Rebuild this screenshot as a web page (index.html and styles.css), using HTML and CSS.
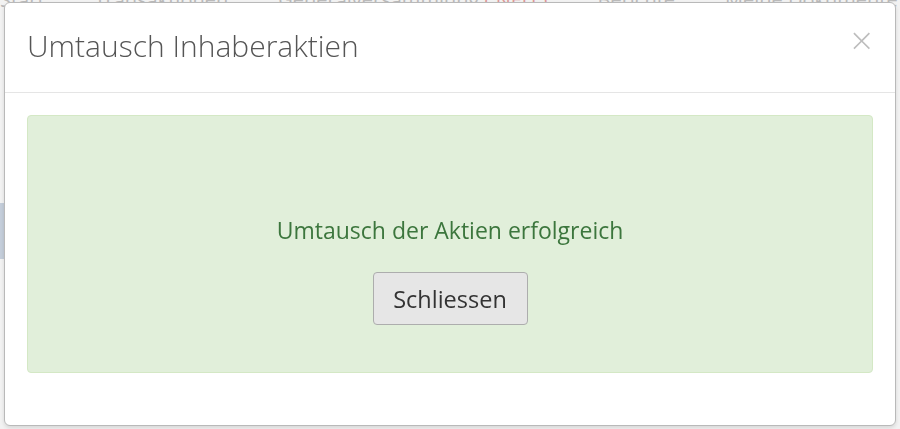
FILE: index.html
```html
<!DOCTYPE html>
<html lang="de">
<head>
<meta charset="utf-8">
<title>Umtausch Inhaberaktien</title>
<link rel="stylesheet" href="styles.css">
</head>
<body>
<div class="page">
  <nav class="nav">
    <span class="nav-item">Start</span>
    <span class="nav-item">Transaktionen</span>
    <span class="nav-item">Generalversammlung <span class="neu">( NEU )</span></span>
    <span class="nav-item">Berichte</span>
    <span class="nav-item">Meine Dokumente</span>
  </nav>
  <div class="page-side"></div>
</div>
<div class="backdrop"></div>
<div class="modal">
  <div class="modal-header">
    <h4 class="modal-title">Umtausch Inhaberaktien</h4>
    <span class="close">&times;</span>
  </div>
  <div class="modal-body">
    <div class="alert">
      <p class="alert-text">Umtausch der Aktien erfolgreich</p>
      <button class="btn" type="button">Schliessen</button>
    </div>
  </div>
</div>
</body>
</html>
```
FILE: styles.css
```css
html, body {
  margin: 0;
  padding: 0;
  height: 100%;
}
body {
  font-family: "Open Sans", Lato, sans-serif;
  background: #fff;
  overflow: hidden;
}
.page {
  height: 100%;
}
.nav {
  display: flex;
  gap: 50px;
  margin-top: -14px;
  font-size: 20px;
  color: #c4c4c4;
  white-space: nowrap;
}
.neu {
  color: #e9a0a0;
}
.page-side {
  margin-top: 190px;
  width: 6px;
  height: 56px;
  background: #cfd9e6;
}
.backdrop {
  position: fixed;
  inset: 0;
  background: rgba(0, 0, 0, 0.05);
}
.modal {
  position: fixed;
  left: 4px;
  top: 2px;
  width: 890px;
  height: 422px;
  background: #fff;
  border: 1px solid #b9b9b9;
  border-radius: 6px;
  box-shadow: 0 2px 4px rgba(0, 0, 0, 0.12);
  display: flex;
  flex-direction: column;
}
.modal-header {
  flex: none;
  height: 89px;
  border-bottom: 1px solid #e5e5e5;
  display: flex;
  justify-content: space-between;
  align-items: flex-start;
  padding: 0 20px 0 22px;
}
.modal-title {
  margin: 23px 0 0;
  font-size: 30px;
  font-weight: 300;
  color: #555;
  line-height: 40px;
}
.close {
  margin-top: 19px;
  font-size: 32px;
  line-height: 36px;
  color: #bdbdbd;
  font-family: "DejaVu Sans", sans-serif;
  font-weight: 300;
}
.modal-body {
  flex: none;
  padding: 22px 22px;
}
.alert {
  box-sizing: border-box;
  height: 258px;
  background: #e1efda;
  border: 1px solid #d4e8c5;
  border-radius: 4px;
  display: flex;
  flex-direction: column;
  align-items: center;
  padding-top: 99px;
}
.alert-text {
  margin: 0;
  font-size: 23px;
  line-height: 30px;
  color: #3c763d;
}
.btn {
  margin-top: 27px;
  width: 155px;
  height: 53px;
  font-family: inherit;
  font-size: 23.5px;
  color: #333;
  background: #e6e6e6;
  border: 1px solid #adadad;
  border-radius: 4px;
  padding: 0;
}
```
